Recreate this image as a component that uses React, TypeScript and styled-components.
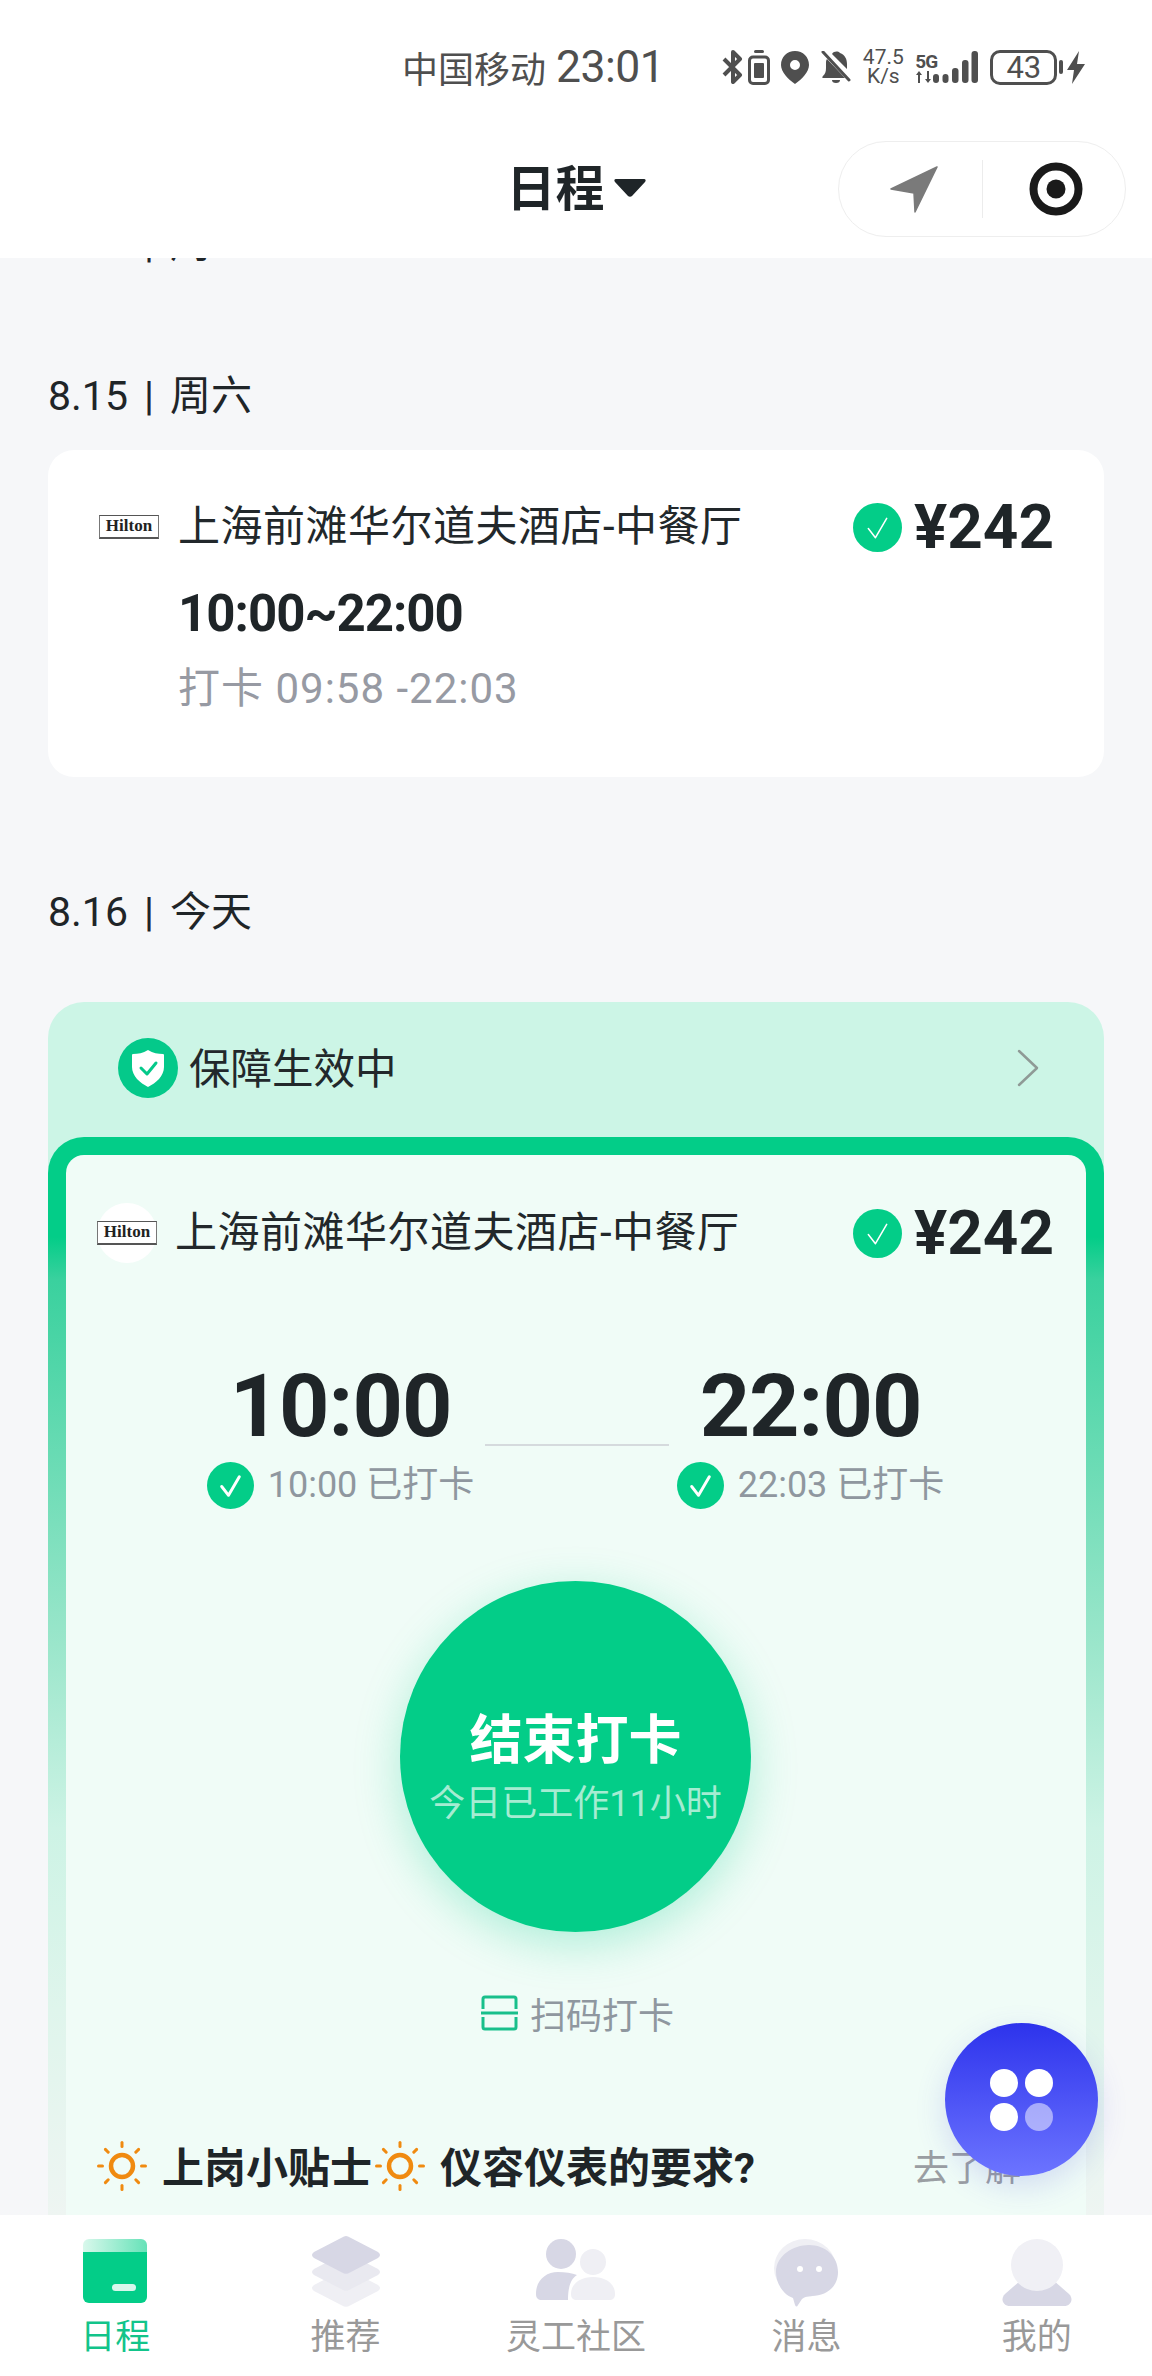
import React from "react";
import styled, { createGlobalStyle } from "styled-components";

const FONT = `Roboto, "Noto Sans CJK SC", sans-serif`;
const GREEN = "#03cd88";
const INK = "#1f2528";
const MUTED = "#8f979f";

const GlobalStyle = createGlobalStyle`
  html, body {
    margin: 0;
    padding: 0;
    background: #f6f7f9;
  }
  * {
    box-sizing: border-box;
  }
`;

const Page = styled.div`
  position: relative;
  display: flex;
  flex-direction: column;
  width: 1152px;
  height: 2376px;
  overflow: hidden;
  background: #f6f7f9;
  font-family: ${FONT};
  color: ${INK};
`;

const TopBar = styled.header`
  flex: none;
  height: 258px;
  background: #fff;
`;

const StatusBar = styled.div`
  display: flex;
  align-items: center;
  height: 134px;
  padding-left: 402px;
  color: #4f4f4f;
`;

const Carrier = styled.span`
  font-size: 36px;
  white-space: nowrap;
`;

const Clock = styled.span`
  margin-left: 10px;
  font-size: 44.5px;
  letter-spacing: -0.5px;
`;

const StatusIcons = styled.div`
  display: flex;
  align-items: center;
  margin-left: 58px;
`;

const StatusIcon = styled.svg<{ $left?: number }>`
  display: block;
  flex: none;
  margin-left: ${(p) => p.$left ?? 0}px;
  fill: #4f4f4f;
`;

const Speed = styled.div`
  display: flex;
  flex-direction: column;
  align-items: center;
  margin-left: 10px;
  width: 44px;
  font-size: 21px;
  line-height: 19px;
  color: #4f4f4f;
`;

const NetType = styled.div`
  display: flex;
  flex-direction: column;
  margin-left: 10px;
  width: 22px;
  font-size: 19px;
  line-height: 19px;
  font-weight: 700;
  letter-spacing: -1px;
`;

const Battery = styled.div`
  display: flex;
  align-items: center;
  justify-content: center;
  margin-left: 12px;
  width: 67px;
  height: 35px;
  border: 3px solid #4f4f4f;
  border-radius: 10px;
  font-size: 31px;
  line-height: 1;
  color: #4f4f4f;
`;

const NavBar = styled.nav`
  display: grid;
  grid-template-columns: 1fr auto 1fr;
  align-items: center;
  height: 110px;
`;

const NavTitle = styled.div`
  display: flex;
  align-items: center;
  grid-column: 2;
  margin-top: -9px;
  font-size: 49px;
  font-weight: 700;
  color: ${INK};
`;

const Caret = styled.svg`
  margin-left: 9px;
  margin-top: 6px;
`;

const Capsule = styled.div`
  display: flex;
  align-items: center;
  grid-column: 3;
  justify-self: end;
  margin-right: 26px;
  width: 288px;
  height: 96px;
  border: 1.5px solid #eeeeee;
  border-radius: 48px;
`;

const CapsuleSlot = styled.div<{ $nudge: number }>`
  display: flex;
  flex: 1;
  align-items: center;
  justify-content: center;

  svg {
    margin-left: ${(p) => p.$nudge}px;
  }
`;

const CapsuleDivider = styled.div`
  flex: none;
  width: 1px;
  height: 58px;
  background: #ececec;
`;

const Main = styled.main`
  flex: 1;
  min-height: 0;
  overflow: hidden;
  padding: 0 48px;
`;

const DateLabel = styled.div<{ $top: number }>`
  margin-top: ${(p) => p.$top}px;
  font-size: 41px;
  line-height: 56px;
  white-space: pre;
`;

const DaySep = styled.span`
  margin: 0 16px;
  font-weight: 400;
`;

const PastCard = styled.section`
  margin-top: 26px;
  height: 327px;
  padding: 39px 50px 0 51px;
  background: #fff;
  border-radius: 26px;
`;

const ShopRow = styled.div`
  display: flex;
  align-items: center;
  height: 76px;
`;

const HiltonMark = styled.div`
  flex: none;
  width: 60px;
  height: 24px;
  border-top: 1.5px solid #555;
  border-bottom: 2.5px solid #555;
  border-left: 1px solid #777;
  border-right: 1px solid #777;
  background: #fff;
  font-family: "Liberation Serif", serif;
  font-size: 17px;
  font-weight: 700;
  line-height: 20px;
  text-align: center;
  color: #222;
`;

const HiltonRound = styled.div`
  display: flex;
  flex: none;
  align-items: center;
  justify-content: center;
  width: 60px;
  height: 60px;
  border-radius: 50%;
  background: #fff;
`;

const ShopName = styled.div<{ $left: number }>`
  margin-left: ${(p) => p.$left}px;
  font-size: 42px;
  line-height: 50px;
  letter-spacing: 0.5px;
  white-space: nowrap;
  color: #22282b;
`;

const Price = styled.div`
  display: flex;
  align-items: center;
  margin-left: auto;
  font-size: 62px;
  font-weight: 700;
  line-height: 76px;
  color: ${INK};
`;

const PriceValue = styled.span`
  margin-left: 12px;
`;

const ShiftTime = styled.div`
  margin: 19px 0 0 79px;
  font-size: 51px;
  font-weight: 700;
  line-height: 60px;
  letter-spacing: -1px;
`;

const PunchLine = styled.div`
  margin: 20px 0 0 79px;
  font-size: 42px;
  line-height: 50px;
  letter-spacing: 1px;
  color: #979aa3;
`;

const ActiveCard = styled.section`
  margin-top: 62px;
  background: #ccf5e6;
  border-radius: 36px 36px 0 0;
`;

const CoverBar = styled.div`
  display: flex;
  align-items: center;
  height: 135px;
  padding: 0 65px 4px 70px;
`;

const CoverText = styled.span`
  margin: -3px 0 0 11px;
  font-size: 41.5px;
  color: #22282b;
`;

const CoverChevron = styled.div`
  display: flex;
  margin-left: auto;
`;

const Frame = styled.div`
  padding: 18px 18px 0;
  border-radius: 36px 36px 0 0;
  background: linear-gradient(180deg, ${GREEN} 0, ${GREEN} 100px, #3ad19e 143px, #9be6cb 508px, #cdf3e5 691px, #dff5ec 873px, #eef5f2 1078px);
`;

const FrameInner = styled.div`
  height: 1100px;
  border-radius: 18px 18px 0 0;
  background: #f0fcf7;
  padding: 40px 32px 0 31px;
`;

const ClockRow = styled.div`
  display: flex;
  margin: 91px 0 0 110px;
`;

const ClockBlock = styled.div`
  display: flex;
  flex-direction: column;
  align-items: center;
  width: 267px;
`;

const BigTime = styled.div`
  font-size: 88px;
  font-weight: 700;
  line-height: 88px;
  letter-spacing: -1px;
`;

const ClockStatus = styled.div`
  display: flex;
  align-items: center;
  gap: 14px;
  margin-top: 10px;
  font-size: 36px;
  line-height: 50px;
  white-space: nowrap;
  color: ${MUTED};
`;

const ClockLine = styled.div`
  flex: none;
  align-self: flex-start;
  margin: 82px 8px 0 11px;
  width: 184px;
  height: 1.5px;
  background: #d5dadd;
`;

const PunchButton = styled.div`
  display: flex;
  flex-direction: column;
  align-items: center;
  margin: 71px auto 0;
  width: 351px;
  height: 351px;
  padding-top: 130px;
  border-radius: 50%;
  background: ${GREEN};
  box-shadow: 0 12px 46px rgba(3, 205, 136, 0.28);
`;

const PunchTitle = styled.div`
  font-size: 53px;
  font-weight: 700;
  line-height: 60px;
  color: #fff;
`;

const PunchSub = styled.div`
  margin-top: 10px;
  font-size: 36px;
  line-height: 46px;
  white-space: nowrap;
  color: #a5ecd2;
`;

const ScanRow = styled.div`
  display: flex;
  align-items: center;
  justify-content: center;
  gap: 12px;
  margin-top: 61px;
  height: 40px;
  padding-left: 4px;
  font-size: 36px;
  color: ${MUTED};
`;

const TipRow = styled.div`
  display: flex;
  align-items: center;
  margin-top: 108px;
  height: 50px;
`;

const TipTitle = styled.span<{ $left: number }>`
  margin: -3px 0 0 ${(p) => p.$left}px;
  font-size: 42px;
  font-weight: 700;
  white-space: nowrap;
  color: ${INK};
`;

const TipSun = styled.span`
  display: flex;
  margin-left: 3px;
`;

const TipLink = styled.div`
  display: flex;
  align-items: center;
  gap: 6px;
  margin: -2px 0 0 auto;
  padding-right: 15px;
  font-size: 36px;
  color: #9a9ea2;
`;

const TabBar = styled.nav`
  flex: none;
  display: grid;
  grid-template-columns: repeat(5, 1fr);
  height: 161px;
  padding-top: 21px;
  background: #fff;
`;

const TabItem = styled.div`
  display: flex;
  flex-direction: column;
  align-items: center;
`;

const TabLabel = styled.span<{ $active?: boolean }>`
  margin-top: 12px;
  font-size: 35px;
  line-height: 36px;
  color: ${(p) => (p.$active ? "#12c48a" : "#999999")};
`;

const FloatButton = styled.div`
  position: absolute;
  left: 945px;
  top: 2023px;
  display: grid;
  grid-template-columns: 28px 28px;
  grid-template-rows: 28px 28px;
  gap: 6px 7px;
  align-content: center;
  justify-content: center;
  width: 153px;
  height: 153px;
  border-radius: 50%;
  background: linear-gradient(180deg, #2d33ec 0%, #6c74ff 100%);
  box-shadow: 0 10px 30px rgba(70, 80, 220, 0.18);
`;

const FloatDot = styled.span<{ $dim?: boolean }>`
  border-radius: 50%;
  background: #fff;
  opacity: ${(p) => (p.$dim ? 0.5 : 1)};
`;

const CheckBadge = ({ size, stroke = 2 }: { size: number; stroke?: number }) => (
  <svg width={size} height={size} viewBox="0 0 48 48">
    <circle cx="24" cy="24" r="24" fill={GREEN} />
    <path d="M15 25l7 9 11-19" fill="none" stroke="#fff" strokeWidth={stroke} strokeLinecap="round" strokeLinejoin="round" />
  </svg>
);

const Sun = () => (
  <svg width="50" height="50" viewBox="0 0 50 50">
    <circle cx="25" cy="25" r="11" fill="none" stroke="#f08a10" strokeWidth="4.5" />
    {[0, 45, 90, 135, 180, 225, 270, 315].map((a) => (
      <rect key={a} x="23.500" y="0" width="3" height="7" rx="1.500" fill="#f08a10" transform={`rotate(${a} 25 25)`} />
    ))}
  </svg>
);

const Chevron = ({ w, h, color, sw }: { w: number; h: number; color: string; sw: number }) => (
  <svg width={w} height={h} viewBox="0 0 22 38">
    <path d="M2 2l18 17L2 36" fill="none" stroke={color} strokeWidth={sw} strokeLinecap="round" strokeLinejoin="round" />
  </svg>
);

const CalendarIcon = () => (
  <svg width="72" height="72" viewBox="0 0 72 72">
    <defs>
      <linearGradient id="calTop" x1="0" x2="1" y1="0" y2="0">
        <stop offset="0" stopColor="#d9f8ec" />
        <stop offset="1" stopColor="#66e2b8" />
      </linearGradient>
    </defs>
    <path d="M4 9a6 6 0 0 1 6-6h52a6 6 0 0 1 6 6v7H4z" fill="url(#calTop)" />
    <path d="M4 16h64v45a6 6 0 0 1-6 6H10a6 6 0 0 1-6-6z" fill={GREEN} />
    <rect x="33" y="48" width="24" height="7" rx="3.500" fill="#d8f7ec" />
  </svg>
);

const diamond = (cy: number, h: number) =>
  `M36 ${cy - h}Q38 ${cy - h} 40 ${cy - h + 1.5}L68 ${cy - 3}Q72 ${cy} 68 ${cy + 3}L40 ${cy + h - 1.5}Q36 ${cy + h + 1} 32 ${cy + h - 1.5}L4 ${cy + 3}Q0 ${cy} 4 ${cy - 3}L32 ${cy - h + 1.5}Q34 ${cy - h} 36 ${cy - h}z`;

const StackIcon = () => (
  <svg width="72" height="72" viewBox="0 0 72 72">
    <path d={diamond(52, 19)} fill="#efeff4" />
    <path d={diamond(36, 19)} fill="#e9e9f0" />
    <path d={diamond(19, 19)} fill="#d7d7e5" />
  </svg>
);

const CommunityIcon = () => (
  <svg width="84" height="72" viewBox="0 0 84 72">
    <circle cx="27" cy="18" r="15" fill="#d7d7e5" />
    <circle cx="59" cy="26" r="13" fill="#efeff4" />
    <path d="M2 58c0-14 10-22 22-22 7 0 14 1 19 3-6 4-9 11-9 25H8c-4 0-6-2-6-6z" fill="#d7d7e5" />
    <path d="M37 58c0-10 9-17 22-17s22 7 22 17c0 4-2 6-6 6H43c-4 0-6-2-6-6z" fill="#efeff4" />
  </svg>
);

const MessageIcon = () => (
  <svg width="72" height="72" viewBox="0 0 72 72">
    <ellipse cx="35" cy="32" rx="31" ry="29" fill="#efeff4" />
    <path d="M39 9c16 0 29 11 29 27S55 60 42 60c-4 0-8 1-10 3l-4 6c-1 2-2 2-3 0l-2-7C12 58 6 46 6 36 6 20 23 9 39 9z" fill="#d7d7e5" />
    <circle cx="30" cy="33" r="3" fill="#fff" />
    <circle cx="49" cy="33" r="3" fill="#fff" />
  </svg>
);

const ProfileIcon = () => (
  <svg width="72" height="72" viewBox="0 0 72 72">
    <path d="M20 44h32l16 14c5 5 2 12-5 12H9C2 70-1 63 4 58z" fill="#d7d7e5" />
    <circle cx="36" cy="29" r="26" fill="#f0f0f5" />
  </svg>
);

const StatusCluster = () => (
  <StatusIcons>
    <StatusIcon width="22" height="34" viewBox="0 0 22 34">
      <path d="M2 9l16 16-7 7V2l7 7-16 16" fill="none" stroke="#4f4f4f" strokeWidth="4" strokeLinejoin="round" />
    </StatusIcon>
    <StatusIcon $left={4} width="22" height="35" viewBox="0 0 22 35">
      <rect x="6" y="0" width="10" height="3" rx="1.500" />
      <rect x="1.500" y="7" width="19" height="26.500" rx="3.500" fill="none" stroke="#4f4f4f" strokeWidth="3" />
      <rect x="6" y="13" width="10" height="15" rx="1" />
    </StatusIcon>
    <StatusIcon $left={11} width="28" height="33" viewBox="0 0 28 33">
      <path fillRule="evenodd" d="M14 0c8 0 14 6 14 14 0 7-7 14-14 19C7 28 0 21 0 14 0 6 6 0 14 0zm0 9a5 5 0 1 0 0 10 5 5 0 0 0 0-10z" />
    </StatusIcon>
    <StatusIcon $left={12} width="30" height="32" viewBox="0 0 30 32">
      <path d="M11 3c2-3 6-3 8-1 5 2 7 6 7 11v5zM6 8l18 19H2c-1 0-1-1 0-2 2-2 3-4 3-8v-5c0-1 0-3 1-4z" />
      <path d="M2 1l26 28" stroke="#4f4f4f" strokeWidth="3" strokeLinecap="round" />
      <path d="M11 29h8a4 3 0 0 1-8 0z" />
    </StatusIcon>
    <Speed>
      <span>47.5</span>
      <span>K/s</span>
    </Speed>
    <NetType>
      <span>5G</span>
      <StatusIcon width="18" height="12" viewBox="0 0 18 12">
        <path d="M4 0l3 4H5v8H3V4H1zM12 0h2v8h2l-3 4-3-4h2z" />
      </StatusIcon>
    </NetType>
    <StatusIcon $left={-4} width="45" height="34" viewBox="0 0 45 34">
      <rect x="0" y="24" width="6" height="9" rx="3" />
      <rect x="9.500" y="24" width="6" height="9" rx="3" />
      <rect x="19" y="18" width="6.500" height="15" rx="3" />
      <rect x="29" y="10" width="6.500" height="23" rx="3" />
      <rect x="38.500" y="1" width="6.500" height="32" rx="3" />
    </StatusIcon>
    <Battery>43</Battery>
    <StatusIcon $left={2} width="4" height="14" viewBox="0 0 4 14">
      <rect width="4" height="14" rx="2" />
    </StatusIcon>
    <StatusIcon $left={4} width="18" height="33" viewBox="0 0 18 33">
      <path d="M12 0L0 19h7L5 33l13-20h-8z" />
    </StatusIcon>
  </StatusIcons>
);

const Shop = ({ round }: { round?: boolean }) => (
  <ShopRow>
    {round ? (
      <HiltonRound>
        <HiltonMark>Hilton</HiltonMark>
      </HiltonRound>
    ) : (
      <HiltonMark>Hilton</HiltonMark>
    )}
    <ShopName $left={round ? 18 : 19}>上海前滩华尔道夫酒店-中餐厅</ShopName>
    <Price>
      <CheckBadge size={49} stroke={1.5} />
      <PriceValue>¥242</PriceValue>
    </Price>
  </ShopRow>
);

const tabs = [
  { label: "日程", icon: <CalendarIcon />, active: true },
  { label: "推荐", icon: <StackIcon /> },
  { label: "灵工社区", icon: <CommunityIcon /> },
  { label: "消息", icon: <MessageIcon /> },
  { label: "我的", icon: <ProfileIcon /> },
];

export default function App() {
  return (
    <Page>
      <GlobalStyle />
      <TopBar>
        <StatusBar>
          <Carrier>中国移动</Carrier>
          <Clock>23:01</Clock>
          <StatusCluster />
        </StatusBar>
        <NavBar>
          <NavTitle>
            日程
            <Caret width="32" height="20" viewBox="0 0 32 20">
              <path d="M2 1h28c2 0 2 2 1 3L18 18c-1 1-3 1-4 0L1 4C0 3 0 1 2 1z" fill={INK} />
            </Caret>
          </NavTitle>
          <Capsule>
            <CapsuleSlot $nudge={8}>
              <svg width="48" height="47" viewBox="0 0 48 47">
                <path d="M47 1L1 23l23 4 1 19z" fill="#7a7a7a" stroke="#7a7a7a" strokeWidth="1.500" strokeLinejoin="round" />
              </svg>
            </CapsuleSlot>
            <CapsuleDivider />
            <CapsuleSlot $nudge={4}>
              <svg width="54" height="54" viewBox="0 0 54 54">
                <circle cx="27" cy="27" r="22.500" fill="none" stroke="#1a1a1a" strokeWidth="8" />
                <circle cx="27" cy="27" r="9.500" fill="#1a1a1a" />
              </svg>
            </CapsuleSlot>
          </Capsule>
        </NavBar>
      </TopBar>

      <Main>
        <DateLabel $top={-43}>8.12<DaySep>|</DaySep>周三</DateLabel>

        <DateLabel $top={97}>8.15<DaySep>|</DaySep>周六</DateLabel>
        <PastCard>
          <Shop />
          <ShiftTime>10:00~22:00</ShiftTime>
          <PunchLine>打卡 09:58 -22:03</PunchLine>
        </PastCard>

        <DateLabel $top={107}>8.16<DaySep>|</DaySep>今天</DateLabel>
        <ActiveCard>
          <CoverBar>
            <svg width="60" height="60" viewBox="0 0 60 60">
              <circle cx="30" cy="30" r="30" fill="#04c98a" />
              <path d="M30 12c5 3 10 4 15 4 1 0 1 1 1 1v12c0 9-8 16-16 20-8-4-16-11-16-20V17s0-1 1-1c5 0 10-1 15-4z" fill="#fff" />
              <path d="M23 30l6 6 9-11" fill="none" stroke="#04c98a" strokeWidth="3" strokeLinecap="round" strokeLinejoin="round" />
            </svg>
            <CoverText>保障生效中</CoverText>
            <CoverChevron>
              <Chevron w={22} h={38} color="#8f9a96" sw={2.5} />
            </CoverChevron>
          </CoverBar>
          <Frame>
            <FrameInner>
              <Shop round />
              <ClockRow>
                <ClockBlock>
                  <BigTime>10:00</BigTime>
                  <ClockStatus>
                    <CheckBadge size={47} stroke={3} />
                    10:00 已打卡
                  </ClockStatus>
                </ClockBlock>
                <ClockLine />
                <ClockBlock>
                  <BigTime>22:00</BigTime>
                  <ClockStatus>
                    <CheckBadge size={47} stroke={3} />
                    22:03 已打卡
                  </ClockStatus>
                </ClockBlock>
              </ClockRow>
              <PunchButton>
                <PunchTitle>结束打卡</PunchTitle>
                <PunchSub>今日已工作11小时</PunchSub>
              </PunchButton>
              <ScanRow>
                <svg width="37" height="36" viewBox="0 0 37 36">
                  <path d="M2 14V4a2 2 0 0 1 2-2h29a2 2 0 0 1 2 2v10M2 22v10a2 2 0 0 0 2 2h29a2 2 0 0 0 2-2V22" fill="none" stroke="#19bf8b" strokeWidth="3" />
                  <path d="M0 18h37" stroke="#19bf8b" strokeWidth="3" />
                </svg>
                扫码打卡
              </ScanRow>
              <TipRow>
                <Sun />
                <TipTitle $left={15}>上岗小贴士</TipTitle>
                <TipSun>
                  <Sun />
                </TipSun>
                <TipTitle $left={15}>仪容仪表的要求?</TipTitle>
                <TipLink>
                  去了解
                  <Chevron w={12} h={22} color="#9a9ea2" sw={3} />
                </TipLink>
              </TipRow>
            </FrameInner>
          </Frame>
        </ActiveCard>
      </Main>

      <TabBar>
        {tabs.map((t) => (
          <TabItem key={t.label}>
            {t.icon}
            <TabLabel $active={t.active}>{t.label}</TabLabel>
          </TabItem>
        ))}
      </TabBar>

      <FloatButton>
        <FloatDot />
        <FloatDot />
        <FloatDot />
        <FloatDot $dim />
      </FloatButton>
    </Page>
  );
}
